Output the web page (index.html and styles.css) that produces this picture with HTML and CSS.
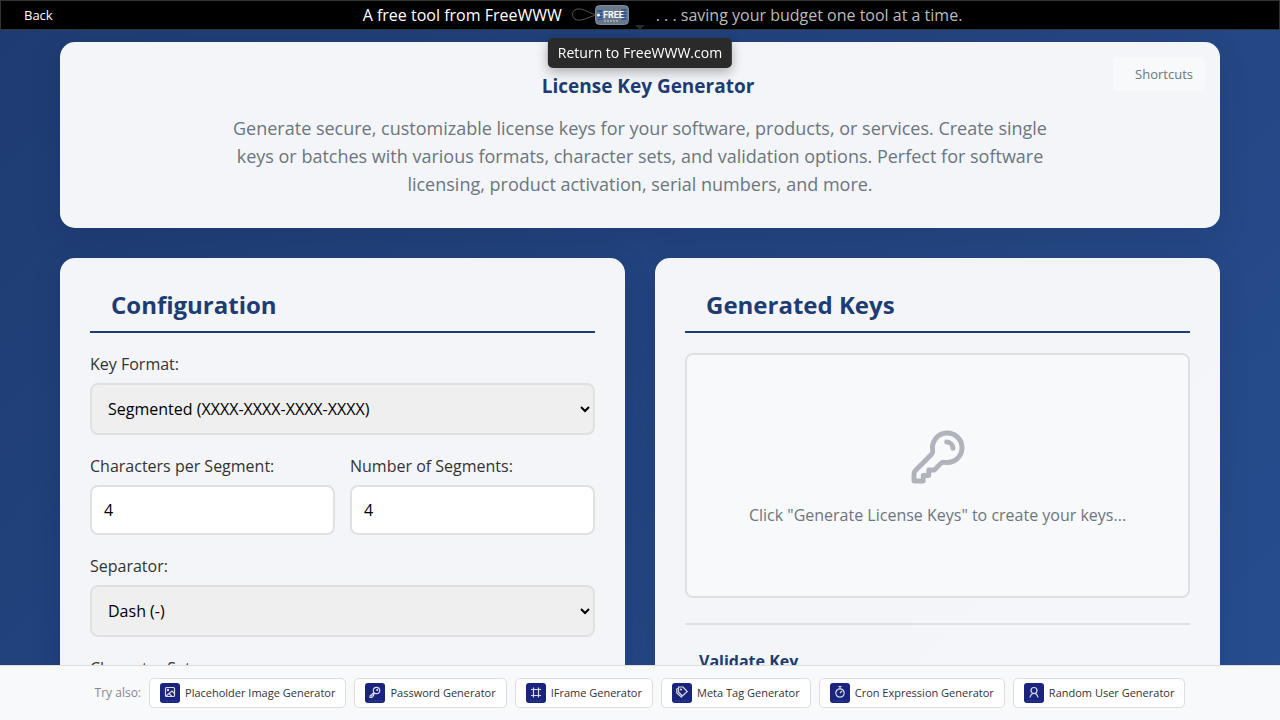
FILE: index.html
```
<!DOCTYPE html>
<html lang="en">
<head>
    <meta charset="UTF-8">
    <meta name="viewport" content="width=device-width, initial-scale=1.0">
    <title>License Key Generator</title>
    <link rel="stylesheet" href="styles.css">
</head>
<body>
    <nav class="top-bar">
        <a class="back-link" href="#">Back</a>
        <a class="brand" href="#">
            <span class="brand-name">A free tool from FreeWWW</span>
            <svg class="brand-logo" viewBox="0 0 60 24" aria-hidden="true">
                <path d="M27 12C20 11 14 5 7 6c-6 1-6 10 0 11 7 1 13-4 20-5" fill="none" stroke="#555" stroke-width="1"/>
                <rect x="25.500" y="2.500" width="33" height="19" rx="4" fill="#66788a" stroke="#7f8b96" stroke-width="1"/>
                <path d="M30 7v10M54 6v12" stroke="#2f559c" stroke-width="5" stroke-dasharray="2 1"/>
                <circle cx="28.500" cy="12" r="1.500" fill="#fff"/>
                <text class="logo-text" x="33" y="15">FREE</text>
                <path d="M34 18h15" stroke="#c8d0d8" stroke-width="1" stroke-dasharray="2 1"/>
            </svg>
            <span class="brand-tagline">. . . saving your budget one tool at a time.</span>
        </a>
        <span class="tooltip" role="tooltip">Return to FreeWWW.com</span>
    </nav>

    <main class="container">
        <header class="card header">
            <button class="shortcuts-btn" type="button">Shortcuts</button>
            <h1>License Key Generator</h1>
            <p>Generate secure, customizable license keys for your software, products, or services. Create single keys or batches with various formats, character sets, and validation options. Perfect for software licensing, product activation, serial numbers, and more.</p>
        </header>

        <div class="main-content">
            <section class="card">
                <h2>Configuration</h2>
                <div class="form-group">
                    <label for="keyFormat">Key Format:</label>
                    <select id="keyFormat">
                        <option>Segmented (XXXX-XXXX-XXXX-XXXX)</option>
                        <option>Continuous</option>
                    </select>
                </div>
                <div class="form-row">
                    <div class="form-group">
                        <label for="segmentLength">Characters per Segment:</label>
                        <input type="number" id="segmentLength" value="4" min="1">
                    </div>
                    <div class="form-group">
                        <label for="segmentCount">Number of Segments:</label>
                        <input type="number" id="segmentCount" value="4" min="1">
                    </div>
                </div>
                <div class="form-group">
                    <label for="separator">Separator:</label>
                    <select id="separator">
                        <option>Dash (-)</option>
                        <option>None</option>
                    </select>
                </div>
                <div class="form-group">
                    <label for="charset">Character Set:</label>
                    <select id="charset">
                        <option>A-Z, 0-9</option>
                    </select>
                </div>
            </section>

            <section class="card">
                <h2>Generated Keys</h2>
                <div class="output">
                    <svg class="output-icon" viewBox="-1 -1 26 26" aria-hidden="true">
                        <path d="M15.500 5.900a2.700 2.700 0 0 1 2.600 2.600M21.750 8.250a6 6 0 0 1-7.029 5.912c-.563-.097-1.159.026-1.563.430L10.500 17.250H8.250v2.250H6v2.250H2.250v-2.818c0-.597.237-1.170.659-1.591l6.499-6.499c.404-.404.527-1 .430-1.563A6 6 0 1 1 21.750 8.250Z"/>
                    </svg>
                    <p>Click "Generate License Keys" to create your keys...</p>
                </div>
                <div class="validate">
                    <h3>Validate Key</h3>
                </div>
            </section>
        </div>
    </main>

    <footer class="try-also">
        <span class="try-label">Try also:</span>
        <a class="tool-link" href="#">
            <svg class="tool-icon" viewBox="0 0 20 20" aria-hidden="true"><rect class="tile" width="20" height="20" rx="3"/><path class="base" d="M3 18h14"/><rect x="5.500" y="4.500" width="9" height="9" rx="1"/><circle cx="8" cy="7" r=".6"/><path d="M6 13l6-5 2.500 2.500M9 10.500l3 3"/></svg>
            Placeholder Image Generator
        </a>
        <a class="tool-link" href="#">
            <svg class="tool-icon" viewBox="0 0 20 20" aria-hidden="true"><rect class="tile" width="20" height="20" rx="3"/><path class="base" d="M3 18h14"/><circle cx="11.500" cy="7.500" r="3.200"/><path d="M9 9.500L5 13v1.500h2V13h1.500v-1.500L10.500 10"/><circle cx="12.200" cy="7" r=".5"/></svg>
            Password Generator
        </a>
        <a class="tool-link" href="#">
            <svg class="tool-icon" viewBox="0 0 20 20" aria-hidden="true"><rect class="tile" width="20" height="20" rx="3"/><path class="base" d="M4 18h11"/><path d="M7.500 4.500v10M12.500 4.500v10M5 6.500h10M5 12.500h10"/></svg>
            IFrame Generator
        </a>
        <a class="tool-link" href="#">
            <svg class="tool-icon" viewBox="0 0 20 20" aria-hidden="true"><rect class="tile" width="20" height="20" rx="3"/><path class="base" d="M3 18h14"/><path d="M6.500 4h4.500l4.200 4.500-4.700 4.500-4-4zM6.500 5.500L4.800 6v4l5.200 4.500"/><circle cx="9" cy="6.500" r=".5"/></svg>
            Meta Tag Generator
        </a>
        <a class="tool-link" href="#">
            <svg class="tool-icon" viewBox="0 0 20 20" aria-hidden="true"><rect class="tile" width="20" height="20" rx="3"/><path class="base" d="M3 18h14"/><circle cx="10" cy="10" r="4.200"/><path d="M10 10l2-2M8.500 3.500h3M10 3.500v2"/></svg>
            Cron Expression Generator
        </a>
        <a class="tool-link" href="#">
            <svg class="tool-icon" viewBox="0 0 20 20" aria-hidden="true"><rect class="tile" width="20" height="20" rx="3"/><path class="base" d="M3 18h14"/><circle cx="10" cy="7.500" r="3"/><path d="M6 14.500c.5-2.500 2-4 4-4s3.500 1.500 4 4"/></svg>
            Random User Generator
        </a>
    </footer>
</body>
</html>
```
FILE: styles.css
```
* {
    margin: 0;
    padding: 0;
    box-sizing: border-box;
}

html {
    scrollbar-width: none;
}

body {
    font-family: "Open Sans", sans-serif;
    font-size: 16px;
    line-height: 22px;
    color: #333;
    min-height: 180vh;
    padding: 42px 0 56px;
    background: linear-gradient(135deg, #1e3c72 0%, #2a5298 100%);
}

a {
    color: inherit;
    text-decoration: none;
}

/* Top bar */
.top-bar {
    position: fixed;
    top: 0;
    left: 0;
    right: 0;
    z-index: 10;
    display: flex;
    align-items: center;
    height: 30px;
    padding: 0 23px;
    background: #000;
    border: 1px solid #333;
    color: #fff;
}

.back-link {
    flex: 1;
    font-size: 13px;
}

.brand {
    display: flex;
    align-items: center;
    margin-left: 45px;
}

.top-bar::after {
    content: "";
    flex: 1;
}

.brand-logo {
    width: 60px;
    height: 24px;
    margin: 0 26px 0 8px;
}

.logo-text {
    font-family: "Roboto", sans-serif;
    font-size: 9px;
    font-weight: bold;
    fill: #fff;
}

.brand-tagline {
    color: #bbb;
}

.tooltip {
    position: absolute;
    top: 37px;
    left: 50%;
    transform: translateX(-50%);
    padding: 4px 10px;
    background: #2a2a2a;
    border-radius: 5px;
    font-size: 14px;
    white-space: nowrap;
    box-shadow: 0 4px 12px rgba(0, 0, 0, 0.3);
}

.tooltip::before {
    content: "";
    position: absolute;
    top: -13px;
    left: 50%;
    margin-left: -5px;
    border: 5px solid transparent;
    border-bottom: none;
    border-top-color: #2a2a2a;
}

/* Layout */
.container {
    max-width: 1200px;
    margin: 0 auto;
    padding: 0 20px;
}

.card {
    background: rgba(255, 255, 255, 0.95);
    border-radius: 15px;
    padding: 30px;
    box-shadow: 0 8px 32px rgba(0, 0, 0, 0.1);
}

.header {
    position: relative;
    margin-bottom: 30px;
    text-align: center;
}

.header h1 {
    padding-left: 16px;
    margin-bottom: 14px;
    font-size: 19px;
    line-height: 28px;
    color: #1e3c72;
}

.header p {
    max-width: 820px;
    margin: 0 auto;
    font-size: 18px;
    line-height: 28px;
    color: #6c757d;
}

.shortcuts-btn {
    position: absolute;
    top: 15px;
    right: 15px;
    padding: 8px 12px 8px 22px;
    background: #f8f9fb;
    border: none;
    border-radius: 5px;
    font-family: inherit;
    font-size: 13px;
    line-height: 18px;
    color: #6c757d;
    cursor: pointer;
}

.main-content {
    display: grid;
    grid-template-columns: 1fr 1fr;
    gap: 30px;
}

.main-content .card {
    min-height: 900px;
}

h2 {
    padding: 0 0 10px 21px;
    margin-bottom: 20px;
    border-bottom: 2px solid #1e3c72;
    font-size: 24px;
    font-weight: bold;
    line-height: 33px;
    color: #1e3c72;
}

/* Form */
.form-group {
    margin-bottom: 20px;
}

.form-row {
    display: grid;
    grid-template-columns: 1fr 1fr;
    gap: 15px;
}

.form-row .form-group {
    min-width: 0;
}

label {
    display: block;
    margin-bottom: 8px;
}

select,
input {
    display: block;
    width: 100%;
    height: 50px;
    padding: 12px;
    border: 2px solid #e0e0e0;
    border-radius: 8px;
    font-family: inherit;
    font-size: 16px;
    color: #000;
}

select {
    height: 52px;
    background-color: #efefef;
}

input {
    background: #fff;
}

/* Output */
.output {
    display: flex;
    flex-direction: column;
    align-items: center;
    justify-content: center;
    gap: 15px;
    min-height: 245px;
    background: #f8f9fb;
    border: 2px solid #e0e0e0;
    border-radius: 8px;
    color: #6c757d;
}

.output-icon {
    width: 64px;
    height: 64px;
    fill: none;
    stroke: #b0b4ba;
    stroke-width: 2;
    stroke-linecap: round;
    stroke-linejoin: round;
}

.validate {
    margin-top: 25px;
    padding-top: 25px;
    border-top: 2px solid #e0e0e0;
}

.validate h3 {
    padding-left: 14px;
    font-size: 16px;
    color: #1e3c72;
}

/* Footer links */
.try-also {
    position: fixed;
    left: 0;
    right: 0;
    bottom: 0;
    display: flex;
    align-items: center;
    justify-content: center;
    gap: 8px;
    padding: 12px 20px;
    background: #f8f9fb;
    border-top: 1px solid #ddd;
}

.try-label {
    font-size: 12px;
    color: #888;
}

.tool-link {
    display: flex;
    align-items: center;
    gap: 5px;
    height: 30px;
    padding: 0 10px;
    background: #fff;
    border: 1px solid #ddd;
    border-radius: 5px;
    font-size: 11px;
    white-space: nowrap;
}

.tool-icon {
    width: 20px;
    height: 20px;
    fill: none;
    stroke: #d8dce0;
    stroke-width: 1.2;
}

.tool-icon .tile {
    fill: #1a237e;
    stroke: none;
}

.tool-icon .base {
    stroke: #2a5298;
    stroke-dasharray: 2 1;
}
```
